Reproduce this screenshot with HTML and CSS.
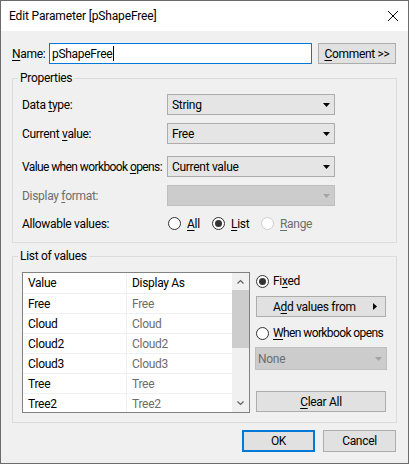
FILE: index.html
```html
<!DOCTYPE html>
<html>
<head>
<meta charset="utf-8">
<link rel="stylesheet" href="styles.css">
</head>
<body>
<div class="window">
  <div class="titlebar">
    <span class="title">Edit Parameter [pShapeFree]</span>
    <svg class="close" width="10" height="10" viewBox="0 0 10 10"><path d="M0 0L10 10M10 0L0 10" stroke="#000" stroke-width="1" fill="none"/></svg>
  </div>
  <div class="body">
    <div class="name-row">
      <span class="name-label"><u>N</u>ame:</span>
      <div class="textbox">pShapeFree<span class="caret"></span></div>
      <div class="btn comment"><u>C</u>omment &gt;&gt;</div>
    </div>

    <fieldset class="group props">
      <legend>Properties</legend>
      <div class="prop-row r1">
        <span class="plabel">Data <u>t</u>ype:</span>
        <div class="combo"><span>String</span><svg width="7" height="4" viewBox="0 0 7 4"><path d="M0 0H7L3.5 4Z" fill="#000"/></svg></div>
      </div>
      <div class="prop-row r2">
        <span class="plabel">Current <u>v</u>alue:</span>
        <div class="combo"><span>Free</span><svg width="7" height="4" viewBox="0 0 7 4"><path d="M0 0H7L3.5 4Z" fill="#000"/></svg></div>
      </div>
      <div class="prop-row r3">
        <span class="plabel tight">Value when workbook <u>o</u>pens:</span>
        <div class="combo"><span>Current value</span><svg width="7" height="4" viewBox="0 0 7 4"><path d="M0 0H7L3.5 4Z" fill="#000"/></svg></div>
      </div>
      <div class="prop-row r4">
        <span class="plabel gray">Display <u>f</u>ormat:</span>
        <div class="combo disabled"><span></span><svg width="7" height="4" viewBox="0 0 7 4"><path d="M0 0H7L3.5 4Z" fill="#a3a3a3"/></svg></div>
      </div>
      <div class="prop-row r5">
        <span class="plabel">Allowable values:</span>
        <div class="opt opt-all"><span class="radio"></span><span><u>A</u>ll</span></div>
        <div class="opt opt-list"><span class="radio on"></span><span><u>L</u>ist</span></div>
        <div class="opt opt-range"><span class="radio dis"></span><span class="gray"><u>R</u>ange</span></div>
      </div>
    </fieldset>

    <fieldset class="group list">
      <legend>List of values</legend>
      <div class="list-body">
        <div class="table">
          <div class="grid">
            <div class="trow head"><span class="c1">Value</span><span class="c2 dark">Display As</span></div>
            <div class="trow"><span class="c1">Free</span><span class="c2">Free</span></div>
            <div class="trow"><span class="c1">Cloud</span><span class="c2">Cloud</span></div>
            <div class="trow"><span class="c1">Cloud2</span><span class="c2">Cloud2</span></div>
            <div class="trow"><span class="c1">Cloud3</span><span class="c2">Cloud3</span></div>
            <div class="trow"><span class="c1">Tree</span><span class="c2">Tree</span></div>
            <div class="trow"><span class="c1">Tree2</span><span class="c2">Tree2</span></div>
          </div>
          <div class="scroll">
            <div class="sarrow"><svg width="7" height="5" viewBox="0 0 7 5"><polyline points="0.5,4.5 3.5,1.5 6.5,4.5" stroke="#606060" stroke-width="1.2" fill="none"/></svg></div>
            <div class="thumb"></div>
            <div class="strack"></div>
            <div class="sarrow"><svg width="7" height="5" viewBox="0 0 7 5"><polyline points="0.5,0.5 3.5,3.5 6.5,0.5" stroke="#606060" stroke-width="1.2" fill="none"/></svg></div>
          </div>
        </div>
        <div class="side">
          <div class="side-radio"><span class="radio on"></span><span>Fi<u>x</u>ed</span></div>
          <div class="btn add"><span>A<u>d</u>d values from</span><svg width="4" height="7" viewBox="0 0 4 7"><path d="M0 0L4 3.5L0 7Z" fill="#000"/></svg></div>
          <div class="side-radio when"><span class="radio"></span><span class="tight"><u>W</u>hen workbook opens</span></div>
          <div class="combo disabled none"><span class="gray">None</span><svg width="7" height="4" viewBox="0 0 7 4"><path d="M0 0H7L3.5 4Z" fill="#a3a3a3"/></svg></div>
          <div class="btn clear"><span><u>C</u>lear All</span></div>
        </div>
      </div>
    </fieldset>

    <div class="footer">
      <div class="btn ok">OK</div>
      <div class="btn cancel">Cancel</div>
    </div>
  </div>
</div>
</body>
</html>
```

FILE: styles.css
```css
* { box-sizing: border-box; }
html, body { margin: 0; padding: 0; }
body {
  font-family: Roboto, "Liberation Sans", sans-serif;
  font-size: 12px;
  line-height: 16px;
  letter-spacing: -0.3px;
  white-space: nowrap;
  color: #000;
  background: #fff;
}
u { text-decoration: underline; text-underline-offset: 2px; }
.tight { letter-spacing: -0.6px; }

.window {
  width: 409px;
  height: 464px;
  border: 1px solid #6b6b6b;
  background: #f0f0f0;
  display: flex;
  flex-direction: column;
}

.titlebar {
  height: 30px;
  flex: none;
  background: #fff;
  display: flex;
  align-items: center;
  justify-content: space-between;
  padding: 0 10px 0 8px;
}
.title { letter-spacing: -0.15px; }
.close { display: block; }

.body { flex: 1; display: flex; flex-direction: column; }

.name-row {
  display: flex;
  align-items: center;
  height: 21px;
  margin: 12px 0 0 11px;
}
.name-label { width: 37px; }
.textbox {
  width: 263px;
  height: 21px;
  border: 1px solid #0078d7;
  background: #fff;
  padding-left: 2px;
  display: flex;
  align-items: center;
}
.caret { width: 1px; height: 15px; background: #000; margin-left: 1px; }

.btn {
  height: 21px;
  background: #e1e1e1;
  border: 1px solid #adadad;
  display: flex;
  align-items: center;
  justify-content: center;
}
.comment { width: 78px; margin-left: 6px; }

fieldset.group {
  margin: 6px 11px 0 11px;
  padding: 0;
  border: 1px solid #dcdcdc;
  min-width: 0;
}
fieldset.group legend {
  margin-left: 5px;
  padding: 0 2px;
  line-height: 16px;
}
fieldset.list { margin-top: 5px; }

.prop-row {
  display: flex;
  align-items: center;
  height: 21px;
  padding-left: 9px;
}
.r1 { margin-top: 8px; }
.r2 { margin-top: 8px; }
.r3 { margin-top: 12px; }
.r4 { margin-top: 8px; }
.r5 { margin-top: 7px; margin-bottom: 8px; }
.plabel { width: 145px; flex: none; }
.gray { color: #6d6d6d; }

.combo {
  width: 168px;
  height: 21px;
  background: #e5e5e5;
  border: 1px solid #acacac;
  display: flex;
  align-items: center;
  justify-content: space-between;
  padding: 0 4px;
}
.combo.disabled { background: #cccccc; border-color: #bfbfbf; }

.opt { display: flex; align-items: center; gap: 6px; }
.opt-all { width: 44px; margin-left: 1px; }
.opt-list { width: 49px; }

.radio {
  width: 13px;
  height: 13px;
  flex: none;
  border-radius: 50%;
  border: 1px solid #333;
  background: #fff;
  display: flex;
  align-items: center;
  justify-content: center;
}
.radio.on::after {
  content: "";
  width: 7px;
  height: 7px;
  border-radius: 50%;
  background: #333;
}
.radio.dis { border-color: #cccccc; }

.list-body {
  display: flex;
  align-items: flex-start;
  margin: 8px 0 9px 9px;
}
.table {
  width: 228px;
  height: 141px;
  flex: none;
  border: 1px solid #828282;
  background: #fff;
  display: flex;
  overflow: hidden;
}
.grid { flex: 1; display: flex; flex-direction: column; min-width: 0; }
.trow {
  display: flex;
  flex: none;
  height: 20px;
  border-bottom: 1px solid #f0f0f0;
}
.trow.head { height: 21px; }
.c1 {
  width: 104px;
  flex: none;
  border-right: 1px solid #f0f0f0;
  padding-left: 5px;
  display: flex;
  align-items: center;
}
.c2 {
  flex: 1;
  padding-left: 5px;
  display: flex;
  align-items: center;
  color: #6d6d6d;
}
.c2.dark { color: #000; }

.scroll {
  width: 17px;
  flex: none;
  background: #f0f0f0;
  display: flex;
  flex-direction: column;
}
.sarrow {
  height: 17px;
  flex: none;
  display: flex;
  align-items: center;
  justify-content: center;
}
.thumb { height: 58px; flex: none; background: #cdcdcd; }
.strack { flex: 1; }

.side {
  width: 132px;
  margin-left: 5px;
  display: flex;
  flex-direction: column;
}
.side-radio {
  height: 18px;
  display: flex;
  align-items: center;
  gap: 4px;
  margin-left: 1px;
}
.side-radio.when { margin-top: 7px; }
.add {
  width: 130px;
  margin: 6px 0 0 1px;
  justify-content: space-between;
  padding: 0 8px 0 16px;
}
.combo.none {
  width: 132px;
  height: 23px;
  margin-top: 5px;
  padding-left: 2px;
}
.clear { width: 130px; margin: 21px 0 0 1px; }

.footer {
  display: flex;
  justify-content: flex-end;
  gap: 8px;
  margin: 7px 12px 0 0;
}
.footer .btn { width: 73px; height: 22px; }
.footer .ok { border: 2px solid #0078d7; }
```
